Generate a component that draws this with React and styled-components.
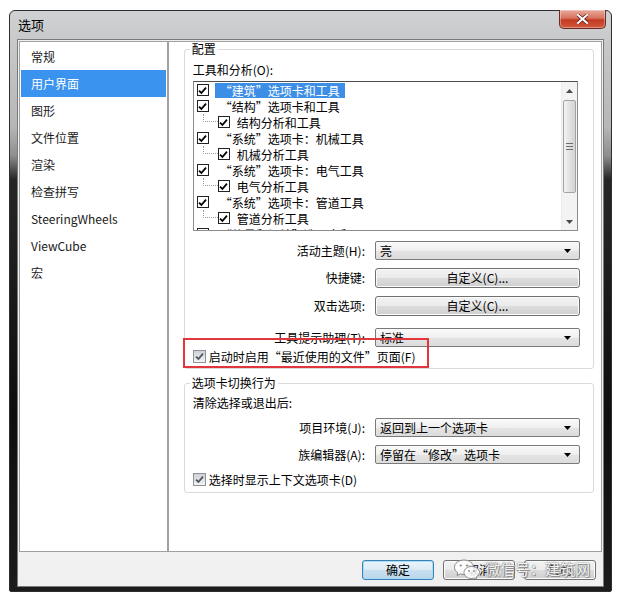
import React from "react";
import styled, { createGlobalStyle } from "styled-components";

const GlobalStyle = createGlobalStyle`
  html, body {
    margin: 0;
    padding: 0;
    background: #fff;
  }
  body {
    font-family: "Noto Sans CJK SC", "Noto Sans", sans-serif;
    font-size: 12px;
    color: #000;
  }
  * {
    box-sizing: border-box;
  }
`;

const Window = styled.div`
  margin: 10px 0 0 9px;
  width: 603px;
  height: 582px;
  display: flex;
  flex-direction: column;
  padding: 0 7px 4px 7px;
  border: 1px solid #2e2e2e;
  border-radius: 6px 6px 2px 2px;
  background: linear-gradient(
    180deg,
    #cfd1d3 0%,
    #c3c5c7 8%,
    #b4b6b8 20%,
    #8c8d8e 25%,
    #262626 29%,
    #0e0e0e 70%,
    #1c1c1c 100%
  );
`;

const TitleBar = styled.div`
  height: 28px;
  display: flex;
  align-items: center;
  justify-content: space-between;
`;

const Title = styled.div`
  margin-left: 1px;
  font-size: 13px;
  line-height: 16px;
  color: #000;
`;

const CloseButton = styled.div`
  align-self: flex-start;
  margin: -1px -2px 0 0;
  width: 47px;
  height: 19px;
  display: flex;
  align-items: center;
  justify-content: center;
  border: 1px solid #6b2a22;
  border-top: none;
  border-radius: 0 0 5px 5px;
  background: linear-gradient(180deg, #e9a99b 0%, #d7735f 45%, #c23a22 55%, #d2583c 100%);
  box-shadow: inset 0 0 0 1px rgba(255, 255, 255, 0.35);
`;

const Client = styled.div`
  flex: 1;
  display: flex;
  flex-direction: column;
  background: #f0f0f0;
  border: 1px solid #7a7a7a;
  padding: 1px 1px 0 1px;
`;

const Body = styled.div`
  display: flex;
  height: 511px;
`;

const Sidebar = styled.div`
  width: 149px;
  background: #fff;
  border: 1px solid #a0a0a0;
  padding: 1px 1px 0;
  display: flex;
  flex-direction: column;
`;

const NavItem = styled.div`
  height: 27px;
  line-height: 27px;
  padding-left: 10px;
  font-size: 12px;
  color: ${({ $active }) => ($active ? "#fff" : "#1a1a1a")};
  background: ${({ $active }) => ($active ? "#3a93ee" : "transparent")};
`;

const Content = styled.div`
  position: relative;
  width: 435px;
  background: #fff;
  border: 1px solid #a0a0a0;
  padding: 0 7px 0 15px;
`;

const Group = styled.fieldset`
  margin: ${({ $mt }) => $mt || 0}px 0 0;
  padding: ${({ $pt }) => $pt}px 13px ${({ $pb }) => $pb}px 8px;
  border: 1px solid #dadada;
  border-radius: 3px;
  min-width: 0;
`;

const Legend = styled.legend`
  margin-left: -3px;
  padding: 0 2px;
  line-height: 14px;
  font-size: 12px;
`;

const Text = styled.div`
  line-height: 14px;
  margin-top: ${({ $mt }) => $mt || 0}px;
`;

const ListBox = styled.div`
  margin: 4px 2px 0 0;
  height: 150px;
  display: flex;
  border: 1px solid #8c8c8c;
  border-top-color: #4f4f4f;
  background: #fff;
  overflow: hidden;
`;

const Rows = styled.div`
  flex: 1;
  overflow: hidden;
`;

const TreeRow = styled.div`
  height: 16px;
  display: flex;
  align-items: center;
  padding-left: ${({ $level }) => ($level ? 9 : 3)}px;
  white-space: nowrap;
`;

const Connector = styled.span`
  align-self: flex-start;
  width: 15px;
  height: 8px;
  border-left: 1px dotted #a0a0a0;
  border-bottom: 1px dotted #a0a0a0;
`;

const RowLabel = styled.span`
  margin-left: ${({ $level }) => ($level ? 2 : 6)}px;
  padding: 0 5px;
  height: 15px;
  line-height: 15px;
  color: ${({ $selected }) => ($selected ? "#fff" : "#000")};
  background: ${({ $selected }) => ($selected ? "#3d8ee6" : "transparent")};
`;

const Box = styled.span`
  flex: none;
  width: ${({ $variant }) => ($variant === "soft" ? 13 : 12)}px;
  height: ${({ $variant }) => ($variant === "soft" ? 13 : 12)}px;
  display: inline-flex;
  align-items: center;
  justify-content: center;
  border: 1px solid ${({ $variant }) => ($variant === "soft" ? "#8e9299" : "#222")};
  background: ${({ $variant }) =>
    $variant === "soft" ? "linear-gradient(180deg, #cfd1d4, #f3f3f3)" : "#fff"};
  color: ${({ $variant }) => ($variant === "soft" ? "#4a5668" : "#000")};
`;

const ScrollBar = styled.div`
  width: 16px;
  display: flex;
  flex-direction: column;
  background: #f3f3f3;
  border-left: 1px solid #ececec;
`;

const ScrollArrow = styled.div`
  height: 17px;
  display: flex;
  align-items: center;
  justify-content: center;
`;

const Track = styled.div`
  flex: 1;
  padding: 1px 1px 0;
`;

const Thumb = styled.div`
  height: 93px;
  display: flex;
  flex-direction: column;
  align-items: center;
  justify-content: center;
  gap: 2px;
  border: 1px solid #a3a3a3;
  border-radius: 2px;
  background: linear-gradient(90deg, #f4f4f4, #e2e2e2 50%, #d3d3d3);
`;

const Grip = styled.span`
  width: 7px;
  height: 1px;
  background: #6c6c6c;
`;

const FieldRow = styled.div`
  display: grid;
  grid-template-columns: 1fr 205px;
  column-gap: 10px;
  align-items: center;
  margin-top: ${({ $mt }) => $mt}px;
`;

const FieldLabel = styled.div`
  text-align: right;
  line-height: 14px;
  white-space: nowrap;
`;

const Combo = styled.div`
  height: 19px;
  display: flex;
  align-items: center;
  justify-content: space-between;
  padding: 0 8px 0 4px;
  border: 1px solid #7a7a7a;
  border-radius: 2px;
  background: linear-gradient(180deg, #fafafa, #efefef 50%, #e4e4e4 51%, #dcdcdc);
  line-height: 17px;
`;

const PushButton = styled.div`
  height: ${({ $h }) => $h || 20}px;
  width: ${({ $w }) => ($w ? `${$w}px` : "auto")};
  margin-left: ${({ $ml }) => $ml || 0}px;
  display: flex;
  align-items: center;
  justify-content: center;
  border: 1px solid ${({ $primary }) => ($primary ? "#3c7fb1" : "#707070")};
  border-radius: 3px;
  background: ${({ $primary }) =>
    $primary
      ? "linear-gradient(180deg, #eaf4fb, #dbeaf5 50%, #c8dff0 51%, #bcd6ea)"
      : "linear-gradient(180deg, #f2f2f2, #ebebeb 50%, #dddddd 51%, #cfcfcf)"};
  box-shadow: ${({ $primary }) => ($primary ? "inset 0 0 0 1px #a6def7" : "inset 0 0 0 1px #fcfcfc")};
  line-height: 14px;
`;

const CheckRow = styled.div`
  display: flex;
  align-items: center;
  gap: 3px;
  height: 14px;
  margin-top: ${({ $mt }) => $mt}px;
  white-space: nowrap;
`;

const Annotation = styled.div`
  position: absolute;
  left: 14px;
  top: 296px;
  width: 246px;
  height: 30px;
  border: 2px solid #e2353d;
`;

const Footer = styled.div`
  position: relative;
  flex: 1;
  display: flex;
  justify-content: flex-end;
  align-items: flex-start;
  padding: 8px 6px 0 0;
`;

const Watermark = styled.div`
  position: absolute;
  left: 434px;
  top: 6px;
  display: flex;
  align-items: center;
  gap: 4px;
  font-size: 15px;
  line-height: 22px;
  color: rgba(255, 255, 255, 0.92);
  text-shadow: 0 0 1px #777, 0 0 2px #888, 1px 1px 0 #999;
  white-space: nowrap;
`;

const Check = ({ variant }) => (
  <Box $variant={variant}>
    <svg width="9" height="9" viewBox="0 0 9 9">
      <path d="M1 4.6 L3.4 7 L8 1.6" fill="none" stroke="currentColor" strokeWidth="1.8" />
    </svg>
  </Box>
);

const DownArrow = () => (
  <svg width="7" height="4" viewBox="0 0 7 4">
    <path d="M0 0 H7 L3.5 4 Z" fill="#000" />
  </svg>
);

const navItems = ["常规", "用户界面", "图形", "文件位置", "渲染", "检查拼写", "SteeringWheels", "ViewCube", "宏"];

const tools = [
  { label: "“建筑”选项卡和工具", level: 0, selected: true },
  { label: "“结构”选项卡和工具", level: 0 },
  { label: "结构分析和工具", level: 1 },
  { label: "“系统”选项卡：机械工具", level: 0 },
  { label: "机械分析工具", level: 1 },
  { label: "“系统”选项卡：电气工具", level: 0 },
  { label: "电气分析工具", level: 1 },
  { label: "“系统”选项卡：管道工具", level: 0 },
  { label: "管道分析工具", level: 1 },
  { label: "“体量和场地”选项卡和工具", level: 0 },
];

const App = () => {
  return (
    <>
      <GlobalStyle />
      <Window>
        <TitleBar>
          <Title>选项</Title>
          <CloseButton>
            <svg width="11" height="10" viewBox="0 0 11 10">
              <path
                d="M1 1 L10 9 M10 1 L1 9"
                stroke="#5a1d14"
                strokeWidth="3.4"
                strokeLinecap="square"
              />
              <path d="M1 1 L10 9 M10 1 L1 9" stroke="#fff" strokeWidth="2" strokeLinecap="square" />
            </svg>
          </CloseButton>
        </TitleBar>
        <Client>
          <Body>
            <Sidebar>
              {navItems.map((item) => (
                <NavItem key={item} $active={item === "用户界面"}>
                  {item}
                </NavItem>
              ))}
            </Sidebar>
            <Content>
              <Group $pt={7} $pb={5}>
                <Legend>配置</Legend>
                <Text>工具和分析(O):</Text>
                <ListBox>
                  <Rows>
                    {tools.map(({ label, level, selected }) => (
                      <TreeRow key={label} $level={level}>
                        {level ? <Connector /> : null}
                        <Check />
                        <RowLabel $level={level} $selected={selected}>
                          {label}
                        </RowLabel>
                      </TreeRow>
                    ))}
                  </Rows>
                  <ScrollBar>
                    <ScrollArrow>
                      <svg width="7" height="4" viewBox="0 0 7 4">
                        <path d="M0 4 H7 L3.5 0 Z" fill="#4a4a4a" />
                      </svg>
                    </ScrollArrow>
                    <Track>
                      <Thumb>
                        <Grip />
                        <Grip />
                        <Grip />
                      </Thumb>
                    </Track>
                    <ScrollArrow>
                      <svg width="7" height="4" viewBox="0 0 7 4">
                        <path d="M0 0 H7 L3.5 4 Z" fill="#4a4a4a" />
                      </svg>
                    </ScrollArrow>
                  </ScrollBar>
                </ListBox>
                <FieldRow $mt={10}>
                  <FieldLabel>活动主题(H):</FieldLabel>
                  <Combo>
                    <span>亮</span>
                    <DownArrow />
                  </Combo>
                </FieldRow>
                <FieldRow $mt={8}>
                  <FieldLabel>快捷键:</FieldLabel>
                  <PushButton>自定义(C)...</PushButton>
                </FieldRow>
                <FieldRow $mt={8}>
                  <FieldLabel>双击选项:</FieldLabel>
                  <PushButton>自定义(C)...</PushButton>
                </FieldRow>
                <FieldRow $mt={12}>
                  <FieldLabel>工具提示助理(T):</FieldLabel>
                  <Combo>
                    <span>标准</span>
                    <DownArrow />
                  </Combo>
                </FieldRow>
                <CheckRow $mt={2}>
                  <Check variant="soft" />
                  <span>启动时启用“最近使用的文件”页面(F)</span>
                </CheckRow>
              </Group>
              <Group $mt={7} $pt={6} $pb={6}>
                <Legend>选项卡切换行为</Legend>
                <Text>清除选择或退出后:</Text>
                <FieldRow $mt={8}>
                  <FieldLabel>项目环境(J):</FieldLabel>
                  <Combo>
                    <span>返回到上一个选项卡</span>
                    <DownArrow />
                  </Combo>
                </FieldRow>
                <FieldRow $mt={8}>
                  <FieldLabel>族编辑器(A):</FieldLabel>
                  <Combo>
                    <span>停留在“修改”选项卡</span>
                    <DownArrow />
                  </Combo>
                </FieldRow>
                <CheckRow $mt={8}>
                  <Check variant="soft" />
                  <span>选择时显示上下文选项卡(D)</span>
                </CheckRow>
              </Group>
              <Annotation />
            </Content>
          </Body>
          <Footer>
            <PushButton $primary $w={72}>
              确定
            </PushButton>
            <PushButton $w={72} $ml={9}>
              取消
            </PushButton>
            <PushButton $w={72} $ml={9}>
              帮助
            </PushButton>
            <Watermark>
              <svg width="28" height="22" viewBox="0 0 28 22">
                <g fill="rgba(255,255,255,0.85)" stroke="#8a8a8a" strokeWidth="1">
                  <path d="M11 2 C5.5 2 1.5 5.3 1.5 9.3 C1.5 11.6 2.8 13.5 4.8 14.8 L4 17.5 L7.2 15.9 C8.4 16.3 9.7 16.5 11 16.5 C16.5 16.5 20.5 13.2 20.5 9.3 C20.5 5.3 16.5 2 11 2 Z" />
                  <path d="M18.5 8.5 C14.2 8.5 11 11.2 11 14.5 C11 17.8 14.2 20.5 18.5 20.5 C19.5 20.5 20.4 20.3 21.2 20 L23.8 21.3 L23.2 19 C25.2 17.9 26.5 16.3 26.5 14.5 C26.5 11.2 22.8 8.5 18.5 8.5 Z" />
                </g>
                <g fill="#8a8a8a">
                  <circle cx="7.8" cy="7.5" r="1.1" />
                  <circle cx="14" cy="7.5" r="1.1" />
                  <circle cx="16" cy="13" r="0.9" />
                  <circle cx="21" cy="13" r="0.9" />
                </g>
              </svg>
              <span>微信号：建筑网</span>
            </Watermark>
          </Footer>
        </Client>
      </Window>
    </>
  );
};

export default App;
